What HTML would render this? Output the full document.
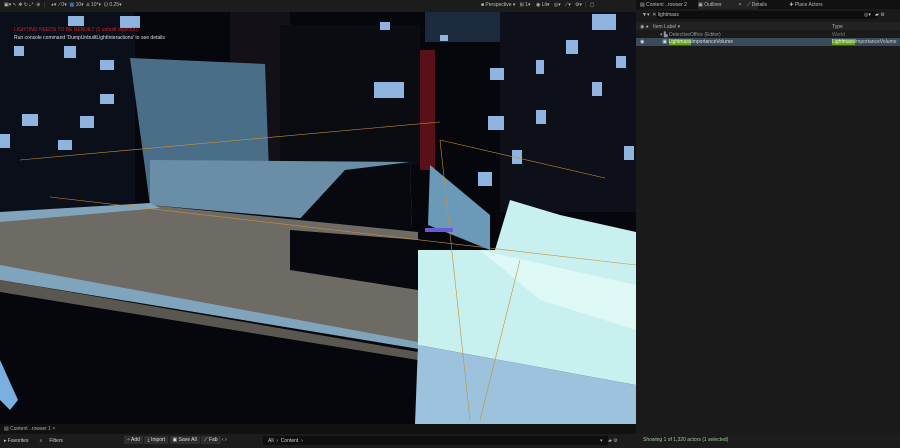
<!DOCTYPE html>
<html><head><meta charset="utf-8"><style>
*{margin:0;padding:0;box-sizing:border-box}
body{width:900px;height:448px;background:#151515;font-family:"Liberation Sans",sans-serif;overflow:hidden;position:relative;color:#c0c0c0;font-size:5px}
.abs{position:absolute}
</style></head><body>
<!-- top toolbar -->
<div class="abs" style="left:0;top:0;width:636px;height:12px;background:#1c1c1c;"></div>
<div class="abs" style="left:4px;top:2px;font-size:5px;color:#bbb;white-space:nowrap">▣▾ ↖ ✥ ↻ ⤢ &nbsp;⊕ ⋮ &nbsp; ◕▾ &nbsp;⁄ 0▾ &nbsp;<span style="color:#4a9ae0">▦</span> 10▾ &nbsp;∆ 10°▾ &nbsp;⊡ 0.25▾</div>
<div class="abs" style="left:481px;top:2px;font-size:5px;color:#bbb;white-space:nowrap">■ Perspective ▾ &nbsp; ⊞ 1▾ &nbsp;&nbsp; ◉ Lit▾ &nbsp; ◎▾ &nbsp; ⟋▾ &nbsp; ⚙▾ ⋮ ▢</div>
<!-- viewport -->
<svg class="abs" style="left:0;top:12px" width="636" height="412" viewBox="0 12 636 412">
<rect x="0" y="12" width="636" height="412" fill="#05070d"/>
<!-- background buildings -->
<rect x="0" y="12" width="135" height="200" fill="#0b0f1a"/>
<rect x="230" y="12" width="60" height="150" fill="#141018"/>
<rect x="280" y="25" width="140" height="140" fill="#0a0c12"/>
<rect x="500" y="12" width="136" height="200" fill="#0d1018"/>
<rect x="425" y="12" width="75" height="30" fill="#1c2a3e"/>
<g fill="#8fb4e0">
<rect x="68" y="16" width="16" height="10"/><rect x="120" y="16" width="20" height="12"/><rect x="14" y="46" width="10" height="10"/>
<rect x="64" y="46" width="12" height="12"/><rect x="100" y="60" width="14" height="10"/><rect x="100" y="94" width="14" height="10"/>
<rect x="22" y="114" width="16" height="12"/><rect x="80" y="116" width="14" height="12"/><rect x="58" y="140" width="14" height="10"/>
<rect x="0" y="134" width="10" height="14"/><rect x="374" y="82" width="30" height="16"/><rect x="488" y="116" width="16" height="14"/>
<rect x="478" y="172" width="14" height="14"/><rect x="536" y="60" width="8" height="14"/><rect x="566" y="40" width="12" height="14"/>
<rect x="592" y="14" width="24" height="16"/><rect x="616" y="56" width="10" height="12"/><rect x="592" y="82" width="10" height="14"/>
<rect x="536" y="110" width="10" height="14"/><rect x="512" y="150" width="10" height="14"/><rect x="624" y="146" width="10" height="14"/>
<rect x="490" y="68" width="14" height="12"/><rect x="380" y="22" width="10" height="8"/><rect x="440" y="35" width="8" height="6"/>
</g>
<rect x="420" y="50" width="15" height="120" fill="#5a1018"/>
<!-- upper rooftop -->
<polygon points="130,58 265,64 270,200 150,205" fill="#4a6e88"/>
<polygon points="150,160 410,162 412,228 150,205" fill="#6a8ea8"/>
<polygon points="345,170 410,162 412,230 300,270 285,235" fill="#07090f"/>
<polygon points="430,165 490,215 490,250 428,225" fill="#6a9ab8"/>
<!-- deck -->
<polygon points="0,215 150,205 418,232 418,345 0,270" fill="#6e6a64"/>
<polygon points="0,212 150,203 160,208 0,222" fill="#7fa4bc"/>
<polygon points="0,265 418,342 425,350 0,280" fill="#7fa4bc"/>
<polygon points="0,280 418,352 418,360 0,292" fill="#5a5650"/>
<polygon points="290,230 418,240 418,290 290,270" fill="#08090e"/>
<!-- right cyan -->
<polygon points="418,250 495,250 510,200 560,215 636,232 636,385 418,345" fill="#c8f0ee"/>
<polygon points="418,345 636,385 636,424 415,424" fill="#9cc2de"/>
<polygon points="480,250 636,285 636,330 540,300" fill="#e6fbf8" opacity=".7"/>
<!-- orange bounds lines -->
<g stroke="#c8903a" stroke-width=".6" fill="none">
<line x1="50" y1="197" x2="636" y2="265"/><line x1="20" y1="160" x2="440" y2="122"/>
<line x1="440" y1="140" x2="605" y2="178"/><line x1="440" y1="140" x2="470" y2="420"/>
<line x1="520" y1="260" x2="480" y2="420"/>
</g>
<rect x="425" y="228" width="28" height="4" fill="#6a5ad8"/>
<polygon points="0,360 18,400 10,410 0,400" fill="#7ab0e0"/>
</svg>
<div class="abs" style="left:14px;top:27px;font-size:5px;color:#d02020;white-space:nowrap">LIGHTING NEEDS TO BE REBUILT (1 unbuilt object(s))</div>
<div class="abs" style="left:14px;top:35px;font-size:5px;color:#ddd;white-space:nowrap">Run console command 'DumpUnbuiltLightInteractions' to see details</div>
<!-- right panel -->
<div class="abs" style="left:636px;top:0;width:264px;height:448px;background:#1a1a1a"></div>
<div class="abs" style="left:636px;top:0;width:264px;height:9px;background:#111"></div>
<div class="abs" style="left:698px;top:0;width:60px;height:9px;background:#242424"></div>
<div class="abs" style="left:640px;top:2px;font-size:5px;white-space:nowrap;color:#bbb">▤ Content ..rowser 2 &nbsp;&nbsp;&nbsp;&nbsp;&nbsp;&nbsp; ▣ Outliner &nbsp;&nbsp;&nbsp;&nbsp;&nbsp;&nbsp;&nbsp;&nbsp;&nbsp;&nbsp; × &nbsp;&nbsp;&nbsp;⟋ Details &nbsp;&nbsp;&nbsp;&nbsp;&nbsp;&nbsp;&nbsp;&nbsp;&nbsp;&nbsp;&nbsp;&nbsp;&nbsp;&nbsp; ✚ Place Actors</div>
<div class="abs" style="left:656px;top:11px;width:222px;height:8px;background:#0e0e0e;border-radius:3px"></div>
<div class="abs" style="left:642px;top:12px;font-size:5px;color:#bbb">▼▾ &nbsp;✕ lightmass</div>
<div class="abs" style="left:864px;top:12px;font-size:5px;color:#bbb">◎▾ &nbsp; ▰ ⚙</div>
<div class="abs" style="left:636px;top:22px;width:264px;height:8px;background:#222"></div>
<div class="abs" style="left:640px;top:24px;font-size:5px;color:#aaa">◉ ● &nbsp; Item Label ▾</div>
<div class="abs" style="left:832px;top:24px;font-size:5px;color:#aaa">Type</div>
<div class="abs" style="left:660px;top:32px;font-size:5px;color:#999;white-space:nowrap">▾ ▙ DetectiveOffice (Editor)</div>
<div class="abs" style="left:832px;top:32px;font-size:5px;color:#777">World</div>
<div class="abs" style="left:636px;top:38px;width:264px;height:8px;background:#3a4c5c"></div>
<div class="abs" style="left:640px;top:39px;font-size:5px;color:#ddd;white-space:nowrap">◉ &nbsp;&nbsp;&nbsp;&nbsp;&nbsp;&nbsp;&nbsp;&nbsp;&nbsp;&nbsp;&nbsp; ▣ <span style="background:#6aa020;color:#dfd">Lightmass</span>ImportanceVolume</div>
<div class="abs" style="left:832px;top:39px;font-size:5px;color:#ccc;white-space:nowrap"><span style="background:#6aa020;color:#dfd">Lightmass</span>ImportanceVolume</div>
<!-- bottom -->
<div class="abs" style="left:0;top:424px;width:636px;height:10px;background:#111"></div>
<div class="abs" style="left:4px;top:426px;font-size:5px;color:#aaa">▤ Content ..rowser 1 ×</div>
<div class="abs" style="left:0;top:434px;width:900px;height:14px;background:#1c1c1c"></div>
<div class="abs" style="left:4px;top:438px;font-size:5px;color:#ccc;white-space:nowrap">▸ Favorites &nbsp;&nbsp;&nbsp;&nbsp;&nbsp;&nbsp; ⌕ &nbsp;&nbsp;&nbsp; Filters</div>
<div class="abs" style="left:124px;top:437px;font-size:5px;color:#ddd;white-space:nowrap"><span style="background:#2e2e2e;padding:1px 3px"><span style="color:#5c5">+</span> Add</span> <span style="background:#2e2e2e;padding:1px 3px">⤓ Import</span> <span style="background:#2e2e2e;padding:1px 3px">▣ Save All</span> <span style="background:#2e2e2e;padding:1px 3px">⟋ Fab</span> ‹ ›</div>
<div class="abs" style="left:263px;top:436px;width:345px;height:9px;background:#0e0e0e"></div>
<div class="abs" style="left:268px;top:438px;font-size:5px;color:#ccc">All &nbsp;›&nbsp; Content &nbsp;›</div>
<div class="abs" style="left:600px;top:438px;font-size:5px;color:#aaa">▾ &nbsp;&nbsp; ▰ ⚙</div>
<div class="abs" style="left:643px;top:437px;font-size:5px;color:#9c9;white-space:nowrap">Showing 1 of 1,320 actors (1 selected)</div>
</body></html>
